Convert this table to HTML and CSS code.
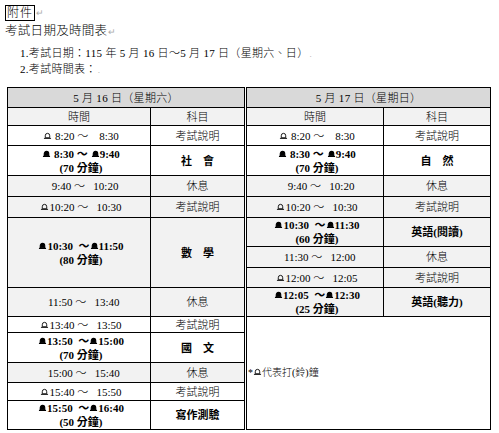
FILE: index.html
```html
<!DOCTYPE html>
<html lang="zh-Hant">
<head>
<meta charset="utf-8">
<title>考試日期及時間表</title>
<link rel="stylesheet" href="styles.css">
</head>
<body>
<div class="page">
  <div class="annex"><span class="box">附件</span><span class="pm">↵</span></div>
  <div class="title">考試日期及時間表<span class="pm">↵</span></div>
  <div class="item">1.考試日期：115 年 5 月 16 日～5 月 17 日（星期六、日）<span class="pm">.</span></div>
  <div class="item">2.考試時間表：<span class="pm">.</span></div>

  <div class="tables">
    <div class="grid left">
      <div class="c head span2">5 月 16 日（星期六）</div>
      <div class="c sub">時間</div><div class="c sub">科目</div>

      <div class="c t"><span><svg class="bell" viewBox="0 0 10 9"><path d="M2.5 6.5V4.2a2.5 2.7 0 0 1 5 0v2.3z"/><path d="M1 7.2h8"/></svg> 8:20 ～    8:30</span></div>
      <div class="c">考試說明</div>

      <div class="c t b"><span><svg class="bell fill" viewBox="0 0 10 9"><path d="M2.5 6.5V4.2a2.5 2.7 0 0 1 5 0v2.3z"/><path d="M1 7.2h8"/></svg> 8:30 ～ <svg class="bell fill" viewBox="0 0 10 9"><path d="M2.5 6.5V4.2a2.5 2.7 0 0 1 5 0v2.3z"/><path d="M1 7.2h8"/></svg>9:40</span><span>(70 分鐘)</span></div>
      <div class="c b">社　會</div>

      <div class="c t g"><span>   9:40 ～   10:20</span></div>
      <div class="c g">休息</div>

      <div class="c t g"><span><svg class="bell" viewBox="0 0 10 9"><path d="M2.5 6.5V4.2a2.5 2.7 0 0 1 5 0v2.3z"/><path d="M1 7.2h8"/></svg>10:20 ～   10:30</span></div>
      <div class="c g">考試說明</div>

      <div class="c t b g"><span><svg class="bell fill" viewBox="0 0 10 9"><path d="M2.5 6.5V4.2a2.5 2.7 0 0 1 5 0v2.3z"/><path d="M1 7.2h8"/></svg>10:30  ～<svg class="bell fill" viewBox="0 0 10 9"><path d="M2.5 6.5V4.2a2.5 2.7 0 0 1 5 0v2.3z"/><path d="M1 7.2h8"/></svg>11:50</span><span>(80 分鐘)</span></div>
      <div class="c b g">數　學</div>

      <div class="c t g"><span>  11:50 ～   13:40</span></div>
      <div class="c g">休息</div>

      <div class="c t"><span><svg class="bell" viewBox="0 0 10 9"><path d="M2.5 6.5V4.2a2.5 2.7 0 0 1 5 0v2.3z"/><path d="M1 7.2h8"/></svg>13:40 ～   13:50</span></div>
      <div class="c">考試說明</div>

      <div class="c t b"><span><svg class="bell fill" viewBox="0 0 10 9"><path d="M2.5 6.5V4.2a2.5 2.7 0 0 1 5 0v2.3z"/><path d="M1 7.2h8"/></svg>13:50  ～<svg class="bell fill" viewBox="0 0 10 9"><path d="M2.5 6.5V4.2a2.5 2.7 0 0 1 5 0v2.3z"/><path d="M1 7.2h8"/></svg>15:00</span><span>(70 分鐘)</span></div>
      <div class="c b">國　文</div>

      <div class="c t g"><span>  15:00 ～   15:40</span></div>
      <div class="c g">休息</div>

      <div class="c t"><span><svg class="bell" viewBox="0 0 10 9"><path d="M2.5 6.5V4.2a2.5 2.7 0 0 1 5 0v2.3z"/><path d="M1 7.2h8"/></svg>15:40 ～   15:50</span></div>
      <div class="c">考試說明</div>

      <div class="c t b"><span><svg class="bell fill" viewBox="0 0 10 9"><path d="M2.5 6.5V4.2a2.5 2.7 0 0 1 5 0v2.3z"/><path d="M1 7.2h8"/></svg>15:50  ～<svg class="bell fill" viewBox="0 0 10 9"><path d="M2.5 6.5V4.2a2.5 2.7 0 0 1 5 0v2.3z"/><path d="M1 7.2h8"/></svg>16:40</span><span>(50 分鐘)</span></div>
      <div class="c b">寫作測驗</div>
    </div>

    <div class="grid right">
      <div class="c head span2">5 月 17 日（星期日）</div>
      <div class="c sub">時間</div><div class="c sub">科目</div>

      <div class="c t"><span><svg class="bell" viewBox="0 0 10 9"><path d="M2.5 6.5V4.2a2.5 2.7 0 0 1 5 0v2.3z"/><path d="M1 7.2h8"/></svg> 8:20 ～    8:30</span></div>
      <div class="c">考試說明</div>

      <div class="c t b"><span><svg class="bell fill" viewBox="0 0 10 9"><path d="M2.5 6.5V4.2a2.5 2.7 0 0 1 5 0v2.3z"/><path d="M1 7.2h8"/></svg> 8:30 ～ <svg class="bell fill" viewBox="0 0 10 9"><path d="M2.5 6.5V4.2a2.5 2.7 0 0 1 5 0v2.3z"/><path d="M1 7.2h8"/></svg>9:40</span><span>(70 分鐘)</span></div>
      <div class="c b">自　然</div>

      <div class="c t g"><span>   9:40 ～   10:20</span></div>
      <div class="c g">休息</div>

      <div class="c t g"><span><svg class="bell" viewBox="0 0 10 9"><path d="M2.5 6.5V4.2a2.5 2.7 0 0 1 5 0v2.3z"/><path d="M1 7.2h8"/></svg>10:20 ～   10:30</span></div>
      <div class="c g">考試說明</div>

      <div class="c t b g"><span><svg class="bell fill" viewBox="0 0 10 9"><path d="M2.5 6.5V4.2a2.5 2.7 0 0 1 5 0v2.3z"/><path d="M1 7.2h8"/></svg>10:30  ～<svg class="bell fill" viewBox="0 0 10 9"><path d="M2.5 6.5V4.2a2.5 2.7 0 0 1 5 0v2.3z"/><path d="M1 7.2h8"/></svg>11:30</span><span>(60 分鐘)</span></div>
      <div class="c b g">英語(閱讀)</div>

      <div class="c t g"><span>  11:30 ～   12:00</span></div>
      <div class="c g">休息</div>

      <div class="c t g"><span><svg class="bell" viewBox="0 0 10 9"><path d="M2.5 6.5V4.2a2.5 2.7 0 0 1 5 0v2.3z"/><path d="M1 7.2h8"/></svg>12:00 ～   12:05</span></div>
      <div class="c g">考試說明</div>

      <div class="c t b g"><span><svg class="bell fill" viewBox="0 0 10 9"><path d="M2.5 6.5V4.2a2.5 2.7 0 0 1 5 0v2.3z"/><path d="M1 7.2h8"/></svg>12:05  ～<svg class="bell fill" viewBox="0 0 10 9"><path d="M2.5 6.5V4.2a2.5 2.7 0 0 1 5 0v2.3z"/><path d="M1 7.2h8"/></svg>12:30</span><span>(25 分鐘)</span></div>
      <div class="c b g">英語(聽力)</div>

      <div class="c note span2"><span>*<svg class="bell" viewBox="0 0 10 9"><path d="M2.5 6.5V4.2a2.5 2.7 0 0 1 5 0v2.3z"/><path d="M1 7.2h8"/></svg>代表打(鈴)鐘</span></div>
    </div>
  </div>
</div>
</body>
</html>
```

FILE: styles.css
```css
html, body {
  margin: 0;
  padding: 0;
  background: #fff;
}

body {
  font-family: "Liberation Serif", "Noto Sans CJK TC", serif;
  font-weight: 300;
  color: #000;
}

.page {
  padding: 5px 0 0 5px;
}

.annex {
  height: 16px;
  display: flex;
  align-items: center;
}

.box {
  border: 1px solid #000;
  font-size: 12px;
  line-height: 14px;
  padding: 0 1px;
  letter-spacing: 1px;
}

.pm {
  color: #aaa;
  font-size: 9px;
  margin-left: 1px;
}

.title {
  margin-top: 2px;
  font-size: 12.5px;
  line-height: 16px;
  letter-spacing: 0.3px;
}

.item {
  margin-top: 6px;
  padding-left: 15px;
  font-size: 11px;
  line-height: 15px;
  letter-spacing: 0.3px;
}

.item + .item {
  margin-top: 0;
}

.tables {
  margin-top: 9px;
  margin-left: 2px;
  display: flex;
  gap: 1px;
  align-items: flex-start;
}

.grid {
  display: grid;
  gap: 1px;
  padding: 1px;
  background: #000;
  font-size: 11px;
  line-height: 14px;
}

.left {
  grid-template-columns: 142px 93px;
  grid-template-rows: 19px 17px 19px 29px 20px 20px 69px 28px 15px 29px 19px 17px 28px;
}

.right {
  grid-template-columns: 136px 106px;
  grid-template-rows: 19px 17px 19px 29px 20px 20px 28px 20px 19px 28px 112px;
}

.c {
  background: #fff;
  display: flex;
  flex-direction: column;
  align-items: center;
  justify-content: center;
  white-space: pre;
  overflow: hidden;
}

.span2 {
  grid-column: span 2;
}

.head {
  background: #d9d9d9;
  letter-spacing: 0.3px;
}

.sub {
  background: #f2f2f2;
}

.g {
  background: #f2f2f2;
}

.b {
  font-weight: bold;
}

.t span {
  padding-left: 4px;
}

.note {
  align-items: flex-start;
  font-size: 10px;
  padding-left: 1px;
}

.bell {
  width: 9px;
  height: 8px;
  vertical-align: 0;
  fill: none;
  stroke: #000;
  stroke-width: 1;
}

.bell.fill {
  fill: #000;
  stroke-width: 1.3;
}
```
